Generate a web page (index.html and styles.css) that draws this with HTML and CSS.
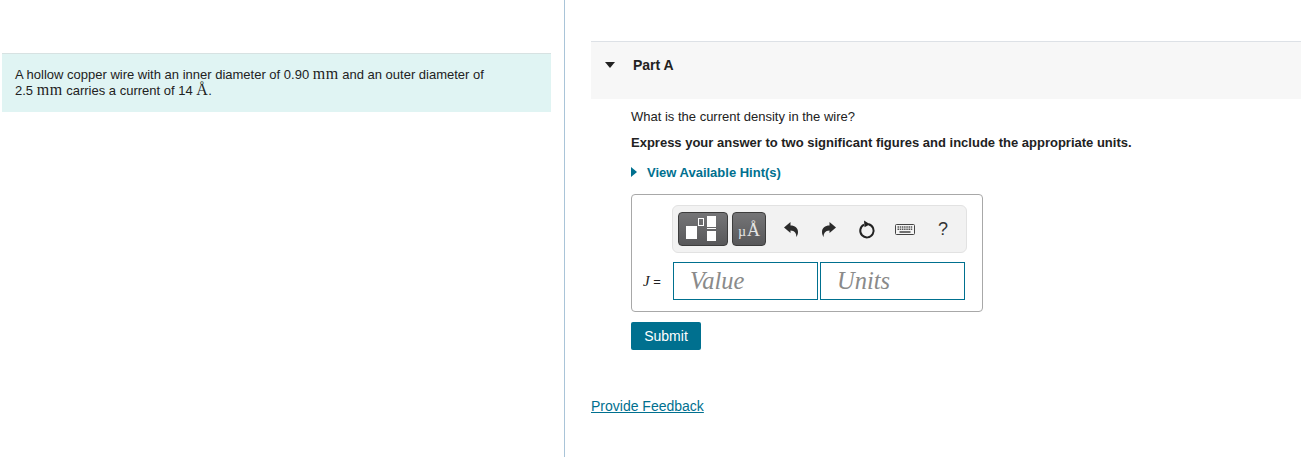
FILE: index.html
```html
<!DOCTYPE html>
<html lang="en">
<head>
<meta charset="utf-8">
<title>Part A</title>
<link rel="stylesheet" href="styles.css">
</head>
<body>
<div class="page">
  <aside class="left">
    <div class="intro">
      <p>A hollow copper wire with an inner diameter of 0.90 <span class="math">mm</span> and an outer diameter of<br>2.5 <span class="math">mm</span> carries a current of 14 <span class="math">A&#778;</span>.</p>
    </div>
  </aside>
  <main class="right">
    <header class="part-head">
      <svg class="caret-down" width="10" height="6" viewBox="0 0 10 6"><path d="M0 0h10L5 6z" fill="#222"/></svg>
      <h2>Part A</h2>
    </header>
    <section class="part-body">
      <p class="q">What is the current density in the wire?</p>
      <p class="instr">Express your answer to two significant figures and include the appropriate units.</p>
      <div class="hint">
        <svg width="6" height="10" viewBox="0 0 6 10"><path d="M0 0l6 5-6 5z" fill="#00708f"/></svg>
        <a>View Available Hint(s)</a>
      </div>
      <div class="answer">
        <div class="toolbar">
          <button class="tbtn wide" type="button" aria-label="Templates">
            <svg width="38" height="26" viewBox="0 0 38 26">
              <rect x="2" y="10" width="11" height="13" fill="#fff"/>
              <rect x="14.500" y="2.500" width="5" height="7" fill="none" stroke="#fff"/>
              <rect x="23" y="0" width="9" height="11" fill="#fff"/>
              <rect x="23" y="12" width="9" height="1" fill="#fff"/>
              <rect x="23" y="15" width="9" height="10" fill="#fff"/>
            </svg>
          </button>
          <button class="tbtn unit" type="button"><span class="mu">µ</span>A&#778;</button>
          <span class="tool first"><svg width="14" height="15" viewBox="0 0 14 15"><path d="M0 5.500L6.500 0v3.500C11 3.500 14 6 14 10c0 2-.7 3.800-1.700 5 .3-3.500-1.500-6.500-5.800-6.500V11z" fill="#2b2b2b"/></svg></span>
          <span class="tool"><svg width="14" height="15" viewBox="0 0 14 15"><path d="M14 5.500L7.500 0v3.500C3 3.500 0 6 0 10c0 2 .7 3.800 1.700 5-.3-3.500 1.500-6.500 5.800-6.500V11z" fill="#2b2b2b"/></svg></span>
          <span class="tool"><svg width="18" height="19" viewBox="0 0 18 19"><path d="M10.500 4.200A6.700 6.700 0 1 1 6 4.700" fill="none" stroke="#222" stroke-width="2"/><path d="M6 .5l6 3.700-5.500 3z" fill="#222"/></svg></span>
          <span class="tool"><svg width="20" height="11" viewBox="0 0 20 11"><rect x=".5" y=".5" width="19" height="10" rx="1" fill="#f4f4f4" stroke="#444"/><path d="M2.500 3h15M2.500 5.200h15" stroke="#555" stroke-width="1.400" stroke-dasharray="1.500 .7"/><path d="M4.500 8h11" stroke="#444" stroke-width="1.500"/></svg></span>
          <span class="tool help">?</span>
        </div>
        <div class="inputs">
          <span class="label"><i>J</i> =</span>
          <div class="field">Value</div>
          <div class="field">Units</div>
        </div>
      </div>
      <button class="submit" type="button">Submit</button>
    </section>
    <a class="feedback">Provide Feedback</a>
  </main>
</div>
</body>
</html>
```
FILE: styles.css
```css
* { box-sizing: border-box; }
html, body { margin: 0; padding: 0; height: 100%; background: #fff; }
body { font-family: "Liberation Sans", Arial, sans-serif; font-size: 13px; color: #222; overflow: hidden; }
p, h2 { margin: 0; }
.page { display: flex; height: 457px; }
.left { width: 565px; flex: none; border-right: 1px solid #a9c4d8; padding: 53px 13px 0 2px; }
.intro { height: 59px; background: #e0f4f3; border-top: 1px solid #d7e2e2; padding: 13px 13px 0; line-height: 16px; }
.math { font-family: "Liberation Serif", serif; font-size: 16px; letter-spacing: .5px; line-height: 0; }
.right { flex: 1; padding: 41px 0 0 26px; }
.part-head { height: 58px; background: #f7f7f7; border-top: 1px solid #dde1e6; display: flex; align-items: flex-start; padding: 15px 0 0 14px; }
.caret-down { margin: 5px 0 0; }
.part-head h2 { font-size: 14px; line-height: 16px; font-weight: 700; margin-left: 18px; }
.part-body { padding: 10px 0 0 40px; }
.q { line-height: 16px; }
.instr { line-height: 16px; font-weight: 700; margin-top: 10px; }
.hint { display: flex; align-items: center; margin-top: 13px; height: 16px; }
.hint a { color: #00708f; font-weight: 700; margin-left: 10px; }
.answer { width: 352px; height: 118px; margin-top: 14px; border: 1px solid #a8a8a8; border-radius: 4px; padding: 10px 0 0 10px; }
.toolbar { width: 295px; height: 48px; margin-left: 30px; background: #f2f2f2; border: 1px solid #e2e2e2; border-radius: 6px; display: flex; align-items: center; padding: 0 5px; }
.tbtn { height: 34px; flex: none; border: 1px solid #3d3d3d; border-radius: 4px; background: linear-gradient(#757577, #58585a); padding: 0; display: flex; align-items: center; justify-content: center; }
.wide { width: 50px; }
.unit { width: 34px; margin-left: 4px; padding-top: 7px; color: #e4e4e4; font-family: "Liberation Serif", serif; font-size: 18px; line-height: 20px; align-items: baseline; }
.mu { font-size: 14px; margin-right: 1px; }
.tool { width: 38px; flex: none; display: flex; justify-content: center; align-items: center; }
.first { margin-left: 6px; }
.help { font-size: 18px; color: #333; }
.inputs { display: flex; align-items: center; margin-top: 9px; }
.label { width: 31px; flex: none; font-size: 13px; padding-left: 1px; white-space: nowrap; }
.label i { font-family: "Liberation Serif", serif; font-size: 15px; }
.field { width: 145px; flex: none; height: 38px; border: 1px solid #00708f; margin-right: 2px; padding-left: 16px; font-family: "Liberation Serif", serif; font-style: italic; font-size: 24.500px; line-height: 36px; color: #8a8a8a; }
.submit { display: block; width: 70px; height: 28px; margin-top: 10px; background: #00708f; border: none; border-radius: 2px; color: #fff; font: 14px "Liberation Sans", Arial, sans-serif; padding: 0; }
.feedback { display: inline-block; margin-top: 48px; color: #00708f; font-size: 14px; line-height: 16px; text-decoration: underline; }
```
